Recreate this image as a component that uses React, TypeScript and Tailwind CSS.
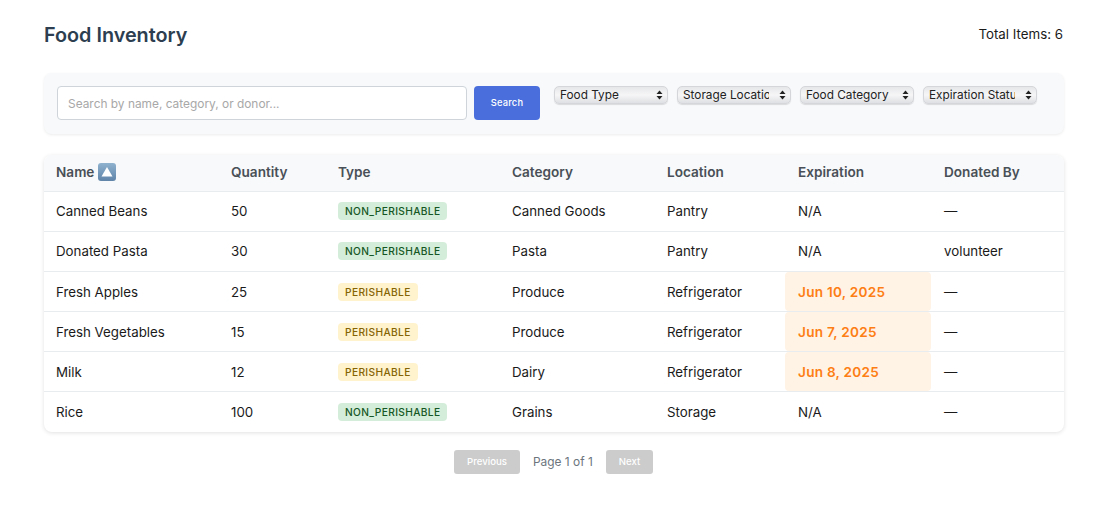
import React from "react";

const columns = [
  { label: "Quantity", w: "w-[107px]", pl: "pl-[12px]" },
  { label: "Type", w: "w-[174px]", pl: "pl-[12px]" },
  { label: "Category", w: "w-[155px]", pl: "pl-[12px]" },
  { label: "Location", w: "w-[130px]", pl: "pl-[12px]" },
  { label: "Expiration", w: "w-[146px]", pl: "pl-[13px]" },
  { label: "Donated By", w: "", pl: "pl-[13px]" },
];

const rows = [
  { name: "Canned Beans", qty: "50", type: "NON_PERISHABLE", cat: "Canned Goods", loc: "Pantry", exp: "N/A", by: "—" },
  { name: "Donated Pasta", qty: "30", type: "NON_PERISHABLE", cat: "Pasta", loc: "Pantry", exp: "N/A", by: "volunteer" },
  { name: "Fresh Apples", qty: "25", type: "PERISHABLE", cat: "Produce", loc: "Refrigerator", exp: "Jun 10, 2025", by: "—" },
  { name: "Fresh Vegetables", qty: "15", type: "PERISHABLE", cat: "Produce", loc: "Refrigerator", exp: "Jun 7, 2025", by: "—" },
  { name: "Milk", qty: "12", type: "PERISHABLE", cat: "Dairy", loc: "Refrigerator", exp: "Jun 8, 2025", by: "—" },
  { name: "Rice", qty: "100", type: "NON_PERISHABLE", cat: "Grains", loc: "Storage", exp: "N/A", by: "—" },
];

function SelectBox({ label }: { label: string }) {
  return (
    <div className="w-[114px] h-[18px] flex items-center pl-[5px] pr-[4px] rounded-[5px] border border-[#d4d6da] bg-gradient-to-b from-[#e6e7e9] via-[#f6f6f7] to-[#dfe0e3] shadow-[0_1px_1px_rgba(0,0,0,0.12)]">
      <span className="flex-1 min-w-0 overflow-hidden whitespace-nowrap text-[11.8px] leading-[16px] text-[#222]">{label}</span>
      <svg width="7" height="10" viewBox="0 0 7 10" className="ml-[10px] shrink-0">
        <path d="M3.5 0.5 L6.5 4 H0.5 Z" fill="#222" />
        <path d="M3.5 9.5 L6.5 6 H0.5 Z" fill="#222" />
      </svg>
    </div>
  );
}

function SortIcon() {
  return (
    <svg width="18" height="18" viewBox="0 0 18 18" className="shrink-0">
      <defs>
        <linearGradient id="sortBlue" x1="0" y1="0" x2="0" y2="1">
          <stop offset="0" stopColor="#8fb2cf" />
          <stop offset="1" stopColor="#5f84a8" />
        </linearGradient>
      </defs>
      <rect x="0" y="0" width="18" height="18" rx="3" fill="url(#sortBlue)" />
      <path d="M9 4 L14.5 13.5 H3.5 Z" fill="#fff" />
    </svg>
  );
}

function Badge({ type }: { type: string }) {
  const tone = type === "PERISHABLE" ? "bg-[#fff3cd] text-[#856404]" : "bg-[#d4edda] text-[#155724]";
  return (
    <span className={`inline-block h-[18px] px-[7px] rounded-[4px] text-[10.2px] leading-[18px] font-medium tracking-[0.36px] align-middle ${tone}`}>
      {type}
    </span>
  );
}

export default function App() {
  return (
    <div className="w-[1102px] h-[509px] bg-white pl-[44px] pr-[38px] pt-[20px] overflow-hidden text-[#1a1a1a] font-['Inter',sans-serif]">
      <div className="flex items-center justify-between h-[30px]">
        <h1 className="text-[19.8px] leading-[30px] font-semibold text-[#2c3e50]">Food Inventory</h1>
        <span className="text-[13.3px] text-[#1a1a1a] relative -left-px">Total Items: 6</span>
      </div>

      <div className="mt-[23px] h-[61px] flex items-start bg-[#f8f9fa] rounded-[8px] shadow-[0_1px_3px_rgba(0,0,0,0.08)] pl-[13px] pt-[13px]">
        <div className="w-[410px] h-[34px] flex items-center rounded-[4px] border border-[#ced4da] bg-white px-[10px] pt-px text-[11.9px] text-[#a8a8a8]">
          Search by name, category, or donor...
        </div>
        <button className="ml-[7px] w-[66px] h-[34px] rounded-[4px] bg-[#4a6fdc] text-white text-[9.3px] font-medium tracking-[0.2px]">
          Search
        </button>
        <div className="ml-[14px] flex gap-[9px]">
          <SelectBox label="Food Type" />
          <SelectBox label="Storage Location" />
          <SelectBox label="Food Category" />
          <SelectBox label="Expiration Status" />
        </div>
      </div>

      <div className="mt-[21px] rounded-[8px] overflow-hidden bg-white shadow-[0_1px_4px_rgba(0,0,0,0.12)]">
        <table className="w-full table-fixed border-collapse text-[13.3px]">
          <thead>
            <tr className="h-[36px] bg-[#f8f9fa] border-b border-[#e9ecef] text-[#495057] text-[13.6px]">
              <th className="w-[175px] pl-[12px] pb-[2px] text-left font-semibold">
                <span className="flex items-center gap-[4px]">
                  Name <SortIcon />
                </span>
              </th>
              {columns.map((c) => (
                <th key={c.label} className={`${c.w} ${c.pl} pb-[2px] text-left font-semibold`}>
                  {c.label}
                </th>
              ))}
            </tr>
          </thead>
          <tbody>
            {rows.map((r, i) => {
              const soon = r.exp !== "N/A";
              const shift = i >= 2 ? "pt-[3px]" : "pt-[2px]";
              return (
                <tr key={r.name} className={`${i < rows.length - 1 ? "h-[40px] border-b border-[#e9ecef]" : "h-[41px]"}`}>
                  <td className={`pl-[12px] ${shift}`}>{r.name}</td>
                  <td className={`pl-[12px] ${shift}`}>{r.qty}</td>
                  <td className={`pl-[12px] ${i === 5 ? "pb-[1px]" : i >= 2 ? "pt-px" : ""}`}><Badge type={r.type} /></td>
                  <td className={`pl-[12px] ${shift}`}>{r.cat}</td>
                  <td className={`pl-[12px] ${shift}`}>{r.loc}</td>
                  {soon ? (
                    <td className="p-0">
                      <div className="h-[39px] pt-[2px] flex items-center pl-[13px] rounded-[4px] bg-[#fff3e6] text-[#fd7e14] font-semibold text-[13.6px] tracking-[0.25px]">
                        {r.exp}
                      </div>
                    </td>
                  ) : (
                    <td className={`pl-[13px] ${shift}`}>{r.exp}</td>
                  )}
                  <td className={`pl-[13px] ${shift}`}>{r.by}</td>
                </tr>
              );
            })}
          </tbody>
        </table>
      </div>

      <div className="mt-[18px] pr-px flex items-center justify-center gap-[13px]">
        <button className="w-[66px] h-[24px] rounded-[3px] bg-[#cccccc] text-white text-[9.6px] font-medium">Previous</button>
        <span className="w-[60px] whitespace-nowrap text-[11.9px] text-[#6c757d]">Page 1 of 1</span>
        <button className="w-[47px] h-[24px] rounded-[3px] bg-[#cccccc] text-white text-[9.6px] font-medium">Next</button>
      </div>
    </div>
  );
}
